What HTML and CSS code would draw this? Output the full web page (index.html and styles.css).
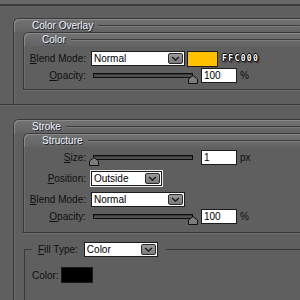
FILE: index.html
```html
<!DOCTYPE html>
<html>
<head>
    <meta charset="utf-8" />
    <title>Layer Style</title>
    <link rel="stylesheet" href="styles.css">
</head>
<body>
    <div class="topbar"></div>

    <div class="group">
        <div class="tab"><span class="title">Color Overlay</span><span class="rule"></span></div>
        <div class="group-body first">
            <div class="sub">
                <div class="tab"><span class="title">Color</span><span class="rule"></span></div>
                <div class="sub-body overlay">
                    <div class="row">
                        <span class="label"><u>B</u>lend Mode:</span>
                        <div class="select wide"><span>Normal</span><span class="drop"><svg width="9" height="5" viewBox="0 0 9 5"><path d="M1 1 L4.5 4 L8 1" fill="none" stroke="#1a1a1a" stroke-width="1.4"/></svg></span></div>
                        <span class="swatch yellow"></span>
                        <span class="hex">FFC000</span>
                    </div>
                    <div class="row r2">
                        <span class="label"><u>O</u>pacity:</span>
                        <div class="slider"><span class="thumb end"><svg width="10" height="9" viewBox="0 0 10 9"><path d="M0.5 8.5 V4 L5 0.5 L9.5 4 V8.5 Z" fill="#7c7c7c" stroke="#111"/></svg></span></div>
                        <input class="num" type="text" value="100" />
                        <span class="unit">%</span>
                    </div>
                </div>
            </div>
        </div>
    </div>
    <div class="divider"></div>

    <div class="group">
        <div class="tab"><span class="title">Stroke</span><span class="rule"></span></div>
        <div class="group-body">
            <div class="sub">
                <div class="tab"><span class="title">Structure</span><span class="rule"></span></div>
                <div class="sub-body stroke">
                    <div class="row">
                        <span class="label"><u>S</u>ize:</span>
                        <div class="slider"><span class="thumb start"><svg width="10" height="9" viewBox="0 0 10 9"><path d="M0.5 8.5 V4 L5 0.5 L9.5 4 V8.5 Z" fill="#7c7c7c" stroke="#111"/></svg></span></div>
                        <input class="num" type="text" value="1" />
                        <span class="unit">px</span>
                    </div>
                    <div class="row r-pos">
                        <span class="label"><u>P</u>osition:</span>
                        <div class="select short focus"><span>Outside</span><span class="drop"><svg width="9" height="5" viewBox="0 0 9 5"><path d="M1 1 L4.5 4 L8 1" fill="none" stroke="#1a1a1a" stroke-width="1.4"/></svg></span></div>
                    </div>
                    <div class="row r-blend">
                        <span class="label"><u>B</u>lend Mode:</span>
                        <div class="select wide"><span>Normal</span><span class="drop"><svg width="9" height="5" viewBox="0 0 9 5"><path d="M1 1 L4.5 4 L8 1" fill="none" stroke="#1a1a1a" stroke-width="1.4"/></svg></span></div>
                    </div>
                    <div class="row r-op">
                        <span class="label"><u>O</u>pacity:</span>
                        <div class="slider"><span class="thumb end"><svg width="10" height="9" viewBox="0 0 10 9"><path d="M0.5 8.5 V4 L5 0.5 L9.5 4 V8.5 Z" fill="#7c7c7c" stroke="#111"/></svg></span></div>
                        <input class="num" type="text" value="100" />
                        <span class="unit">%</span>
                    </div>
                </div>
            </div>

            <fieldset class="fill">
                <legend>
                    <span class="flabel"><u>F</u>ill Type:</span>
                    <div class="select fillsel"><span>Color</span><span class="drop"><svg width="9" height="5" viewBox="0 0 9 5"><path d="M1 1 L4.5 4 L8 1" fill="none" stroke="#1a1a1a" stroke-width="1.4"/></svg></span></div>
                </legend>
                <div class="color-row">
                    <span class="clabel">Color:</span>
                    <span class="swatch black"></span>
                </div>
            </fieldset>
        </div>
    </div>
</body>
</html>
```

FILE: styles.css
```css
body {
    margin: 0;
    background-color: #5f5f5f;
    font-family: "Liberation Sans", Arial, sans-serif;
    font-size: 10px;
    color: #101010;
    overflow: hidden;
}
.topbar {
    height: 4px;
    background-color: #676767;
    border-bottom: 2px solid #3c3c3c;
    margin-bottom: 12px;
}
.group {
    margin-left: 13px;
    border-left: 1px solid #383838;
    border-top: 1px solid #383838;
    border-top-left-radius: 6px;
    box-shadow: inset 1px 0 #6e6e6e;
}
.tab {
    display: flex;
    align-items: center;
    height: 13px;
    border-top-left-radius: 5px;
    background: linear-gradient(#727272, #646464);
    box-shadow: inset 1px 1px #8a8a8a;
}
.title {
    padding-left: 18px;
    color: #eef2fb;
    text-shadow: 1px 1px 0 #1e2430;
    white-space: nowrap;
}
.rule {
    flex: 1;
    height: 0;
    margin-left: 5px;
    border-top: 1px solid #3e3e3e;
    border-bottom: 1px solid #7a7a7a;
}
.group-body {
    padding: 0 0 0 9px;
}
.group-body.first {
    padding-bottom: 14px;
}
.divider {
    border-top: 1px solid #3a3a3a;
    border-bottom: 1px solid #686868;
    margin-bottom: 13px;
}
.sub {
    border-left: 1px solid #383838;
    border-top: 1px solid #383838;
    border-bottom: 1px solid #383838;
    border-top-left-radius: 6px;
    box-shadow: inset 1px 0 #6e6e6e, 0 1px #6e6e6e;
}
.sub-body.overlay {
    padding: 5px 0 6px 0;
}
.sub-body.stroke {
    padding: 3px 0 8px 0;
}
.row {
    display: flex;
    align-items: center;
    height: 15px;
}
.r2 { margin-top: 2px; }
.r-pos { margin-top: 6px; }
.r-blend { margin-top: 6px; }
.r-op { margin-top: 2px; }
.label {
    width: 62px;
    text-align: right;
    margin-right: 5px;
    white-space: nowrap;
}
.select {
    position: relative;
    display: flex;
    align-items: center;
    height: 13px;
    background-color: #fff;
    border: 1px solid #1c1c1c;
    padding-left: 2px;
    color: #000;
    box-sizing: content-box;
}
.select.wide { width: 90px; }
.select.short { width: 67px; }
.select.focus { outline: 1px solid #e8e8e8; }
.select.fillsel { width: 70px; }
.drop {
    position: absolute;
    right: 1px;
    top: 1px;
    width: 13px;
    height: 9px;
    display: flex;
    align-items: center;
    justify-content: center;
    background: linear-gradient(#9a9a9a, #7a7a7a);
    border: 1px solid #2a2a2a;
    border-radius: 2px;
}
.swatch {
    display: inline-block;
    width: 29px;
    height: 14px;
    border: 1px solid #1a1a1a;
}
.swatch.yellow {
    background-color: #ffc000;
    margin-left: 2px;
}
.swatch.black {
    background-color: #000;
    width: 30px;
}
.hex {
    margin-left: 4px;
    font-family: "DejaVu Sans Mono", monospace;
    font-weight: bold;
    font-size: 8px;
    letter-spacing: 1.4px;
    color: #fff;
    text-shadow: 1px 0 #000, -1px 0 #000, 0 1px #000, 0 -1px #000, 2px 2px 1px #2a2a2a;
}
.slider {
    position: relative;
    width: 98px;
    height: 3px;
    margin-left: 2px;
    border: 1px solid #0e0e0e;
    background-color: #505050;
    box-shadow: inset 0 1px #3a3a3a;
}
.thumb {
    position: absolute;
    top: 1px;
    line-height: 0;
}
.thumb.end { right: -6px; }
.thumb.start { left: -5px; }
.num {
    width: 32px;
    height: 13px;
    margin: 0 0 0 8px;
    padding: 0 0 0 2px;
    border: 1px solid #1c1c1c;
    background-color: #fff;
    font-family: "Liberation Sans", Arial, sans-serif;
    font-size: 10px;
    color: #000;
}
.unit {
    margin-left: 3px;
}
.fill {
    margin: 9px 0 0 1px;
    padding: 0 0 30px 7px;
    border: 0;
    border-top: 1px solid #383838;
    border-left: 1px solid #383838;
    min-width: 0;
}
.fill legend {
    display: flex;
    align-items: center;
    padding: 0 8px 0 6px;
}
.flabel {
    margin-right: 6px;
}
.color-row {
    display: flex;
    align-items: center;
    margin-top: 10px;
}
.clabel {
    margin-right: 2px;
}
```
